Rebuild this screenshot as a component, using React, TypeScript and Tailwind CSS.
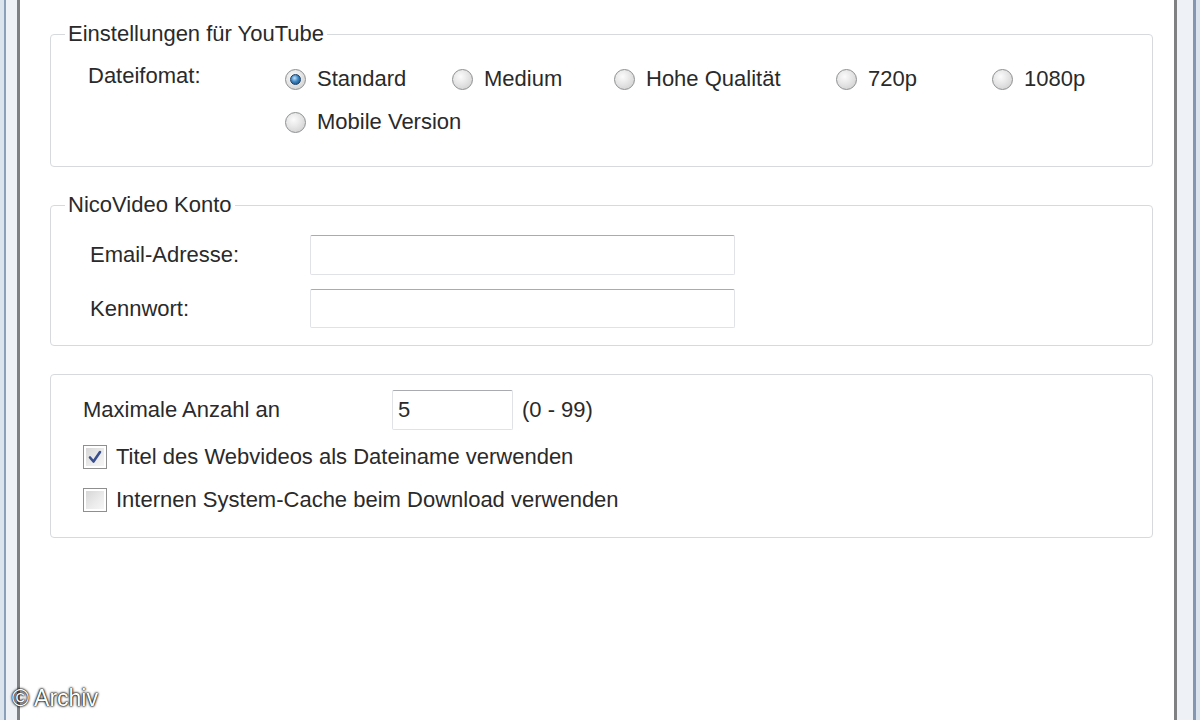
import React from "react";

const font = "font-['Liberation_Sans',Arial,sans-serif]";

const Radio = ({ label, checked = false }: { label: string; checked?: boolean }) => (
  <label className="flex items-center gap-[11px] h-[24px] whitespace-nowrap">
    <span className="w-[21px] h-[21px] rounded-full border border-[#8e8f91] bg-[radial-gradient(circle_at_40%_35%,#fbfbfb_0%,#e6e6e6_45%,#c9c9c9_100%)] flex items-center justify-center shrink-0">
      {checked && (
        <span className="w-[11px] h-[11px] rounded-full border border-[#1d3f66] bg-[radial-gradient(circle_at_40%_35%,#bfe3fb_0%,#3c86c4_45%,#123f6e_100%)]" />
      )}
    </span>
    <span>{label}</span>
  </label>
);

const Checkbox = ({ label, checked = false }: { label: string; checked?: boolean }) => (
  <label className="flex items-center gap-[9px] h-[26px] whitespace-nowrap">
    <span className="w-[24px] h-[24px] border border-[#8f8f8f] bg-white p-[2px] shrink-0">
      <span className="w-full h-full flex items-center justify-center bg-[linear-gradient(135deg,#d7d7d7_0%,#ececec_60%,#f6f6f6_100%)]">
        {checked && (
          <svg width="16" height="16" viewBox="0 0 16 16">
            <path d="M3 8.5 L6.5 12.5 L13 3" fill="none" stroke="#3a4f8e" strokeWidth="2.6" strokeLinecap="round" strokeLinejoin="round" />
          </svg>
        )}
      </span>
    </span>
    <span>{label}</span>
  </label>
);

const TextBox = ({ className, value }: { className: string; value?: string }) => (
  <div
    className={`border border-[#e0e2e8] border-t-[#a9abb2] rounded-[2px] bg-white flex items-center px-[5px] ${className}`}
  >
    {value}
  </div>
);

export default function App() {
  return (
    <div className={`relative w-[1200px] h-[720px] bg-white flex overflow-hidden text-[22px] leading-[24px] text-[#2a2a2a] ${font}`}>
      {/* left window frame */}
      <div className="flex w-[20px] shrink-0">
        <div className="w-[4px] bg-[#dbe3ec]" />
        <div className="w-[2px] bg-[#8aa0b9]" />
        <div className="flex-1 bg-[#eef1f5]" />
        <div className="w-[3px] bg-[#7f8081]" />
      </div>

      <div className="flex-1 pl-[30px] pr-[21px] pt-[22px]">
        {/* YouTube */}
        <fieldset className="border border-[#d6dadd] rounded-[4px]">
          <legend className="ml-[14px] px-[3px]">Einstellungen für YouTube</legend>
          <div className="flex pl-[37px] pt-[21px] pb-[32px]">
            <div className="w-[197px] -mt-[3px]">Dateifomat:</div>
            <div className="grid grid-cols-[167px_162px_222px_156px_auto] gap-y-[19px]">
              <Radio label="Standard" checked />
              <Radio label="Medium" />
              <Radio label="Hohe Qualität" />
              <Radio label="720p" />
              <Radio label="1080p" />
              <Radio label="Mobile Version" />
            </div>
          </div>
        </fieldset>

        {/* NicoVideo */}
        <fieldset className="mt-[26px] border border-[#d6dadd] rounded-[4px]">
          <legend className="ml-[14px] px-[3px]">NicoVideo Konto</legend>
          <div className="flex flex-col gap-[14px] pl-[39px] pt-[18px] pb-[17px]">
            <div className="flex items-center">
              <div className="w-[220px]">Email-Adresse:</div>
              <TextBox className="w-[425px] h-[40px]" />
            </div>
            <div className="flex items-center">
              <div className="w-[220px]">Kennwort:</div>
              <TextBox className="w-[425px] h-[39px]" />
            </div>
          </div>
        </fieldset>

        {/* Allgemein */}
        <div className="mt-[28px] border border-[#d6dadd] rounded-[4px] pl-[32px] pt-[15px] pb-[24px]">
          <div className="flex items-center">
            <div className="w-[309px]">Maximale Anzahl an</div>
            <TextBox className="w-[121px] h-[40px]" value="5" />
            <span className="ml-[9px]">(0 - 99)</span>
          </div>
          <div className="mt-[14px] flex flex-col gap-[17px]">
            <Checkbox label="Titel des Webvideos als Dateiname verwenden" checked />
            <Checkbox label="Internen System-Cache beim Download verwenden" />
          </div>
        </div>
      </div>

      {/* right window frame */}
      <div className="flex w-[26px] shrink-0">
        <div className="w-[3px] bg-[#7f8081]" />
        <div className="flex-1 bg-[#eef1f5]" />
        <div className="w-[3px] bg-[#8597b0]" />
        <div className="w-[4px] bg-[#dbe3ec]" />
      </div>

      <div className="absolute left-[12px] bottom-[10px] text-[23px] text-white [text-shadow:0_0_3px_#000,0_0_2px_#000,0_0_1px_#000]">
        © Archiv
      </div>
    </div>
  );
}
